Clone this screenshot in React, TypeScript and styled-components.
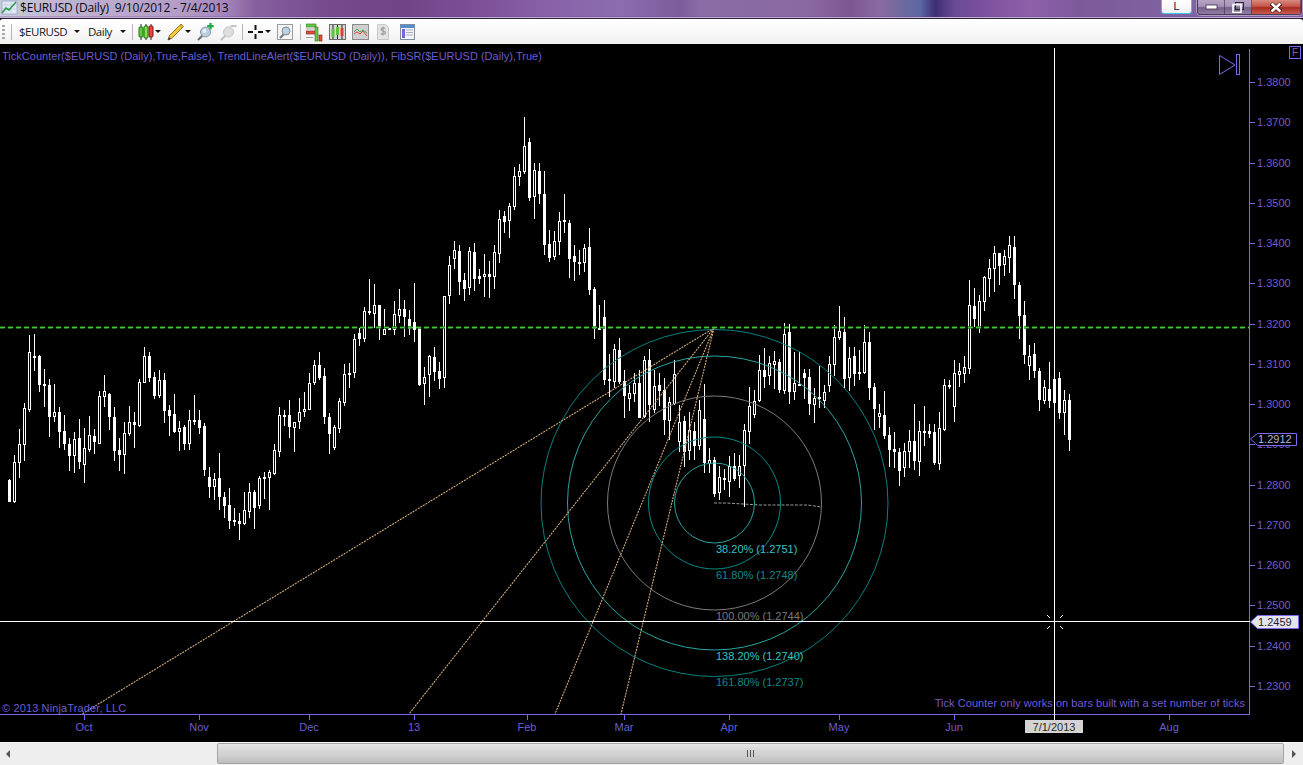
import React from "react";
import styled, { createGlobalStyle } from "styled-components";

const Global = createGlobalStyle`
  html, body { margin: 0; padding: 0; height: 100%; background: #000; overflow: hidden; }
  #root { height: 100%; }
`;

const Window = styled.div`
  width: 1303px;
  height: 765px;
  display: flex;
  flex-direction: column;
  overflow: hidden;
  font-family: "Liberation Sans", Arial, sans-serif;
`;

const TitleBar = styled.header`
  height: 17px;
  display: flex;
  align-items: flex-start;
  padding: 0 1px 0 1px;
  border-bottom: 1px solid #c4aeda;
  box-shadow: inset 0 -1px 0 rgba(90, 60, 120, 0.25);
  background: linear-gradient(90deg, #c9cbdc 0, #c0b4d0 60px, #b49cc6 180px, #a585bb 225px, #87609f 255px, #744a8d 330px, #6f4587 400px, #7b4f96 470px, #8a64aa 560px, #8c6cae 620px, #7e5c9c 680px, #8a6ca6 700px, #8a68a4 810px, #7d5690 850px, #8a6aa2 880px, #686a9e 905px, #5c68a4 920px, #3e2e72 935px, #6a4a94 955px, #8456a2 1000px, #8e60aa 1030px, #7e5a9a 1080px, #8062a0 1170px, #8866aa 1303px);
`;

const TitleText = styled.span`
  margin-left: 2px;
  font: 12px/15px "Open Sans", "Liberation Sans", sans-serif;
  letter-spacing: -0.16px;
  white-space: pre;
  color: #0c0812;
`;

const TitleIcon = styled.svg`
  width: 17px;
  height: 15px;
  flex: none;
`;

const Spacer = styled.div`
  flex: 1;
`;

const LockButton = styled.div`
  width: 29px;
  height: 13px;
  margin-right: 5px;
  border: 1px solid #3fc4e4;
  border-top: none;
  border-radius: 0 0 3px 3px;
  background: linear-gradient(#ffffff, #eef0f2);
  font: 11px/12px "Liberation Sans", sans-serif;
  text-align: center;
  color: #16202c;
`;

const CaptionGroup = styled.div`
  display: flex;
  height: 14px;
  border: 1px solid #4c3a58;
  border-top: none;
  border-radius: 0 0 4px 4px;
  overflow: hidden;
  box-shadow: 0 0 0 1px rgba(255, 255, 255, 0.35);
`;

const CaptionButton = styled.div<{ $w: number; $danger?: boolean }>`
  box-sizing: border-box;
  width: ${(p) => p.$w}px;
  height: 100%;
  display: flex;
  align-items: center;
  justify-content: center;
  border-right: 1px solid rgba(60, 40, 70, 0.55);
  background: ${(p) =>
    p.$danger
      ? "linear-gradient(#d88a80 0, #c4564a 45%, #a82c22 55%, #c85c50 100%)"
      : "linear-gradient(#b6a3c4 0, #a591b6 45%, #75618c 55%, #8f7ca2 100%)"};
`;

const Toolbar = styled.nav`
  display: flex;
  align-items: center;
  border-radius: 3px 3px 0 0;
  background: linear-gradient(#ffffff 0, #fbfbfb 40%, #f0f0f0 100%);
  border-top: 1px solid #2c2034;
  box-sizing: border-box;
  height: 26px;
`;

const Grip = styled.div`
  width: 3px;
  height: 14px;
  margin-left: 2px;
  background: repeating-linear-gradient(#a8a8a8 0 2px, transparent 2px 4px);
`;

const Sep = styled.div<{ $ml: number }>`
  width: 1px;
  height: 16px;
  margin-left: ${(p) => p.$ml}px;
  background: #b4b4b4;
`;

const DropLabel = styled.span<{ $ml: number; $w: number }>`
  flex: none;
  width: ${(p) => p.$w}px;
  margin-left: ${(p) => p.$ml}px;
  font: 11.5px/16px "Open Sans", "Liberation Sans", sans-serif;
  letter-spacing: -0.48px;
  white-space: nowrap;
  color: #101828;
`;

const Caret = styled.i<{ $ml: number }>`
  display: block;
  flex: none;
  margin-left: ${(p) => p.$ml}px;
  width: 0;
  height: 0;
  border-left: 3px solid transparent;
  border-right: 3px solid transparent;
  border-top: 3px solid #111;
`;

const Tool = styled.svg<{ $ml: number; $w: number }>`
  flex: none;
  width: ${(p) => p.$w}px;
  height: 20px;
  margin-left: ${(p) => p.$ml}px;
`;

const ChartPane = styled.main`
  flex: none;
  height: 698px;
  background: #000;
`;

const ChartSvg = styled.svg`
  display: block;
  width: 1303px;
  height: 698px;
  font-family: "Liberation Sans", Arial, sans-serif;
  font-size: 11px;
  text {
    white-space: pre;
  }
`;

const ScrollBar = styled.footer`
  flex: 1;
  display: flex;
  align-items: flex-start;
  background: #eeeeee;
  border-top: 1px solid #f8f8f8;
`;

const ArrowCell = styled.div<{ $w: number }>`
  width: ${(p) => p.$w}px;
  height: 100%;
  display: flex;
  align-items: center;
  justify-content: center;
  flex: none;
`;

const Arrow = styled.i<{ $dir: "left" | "right" }>`
  display: block;
  width: 0;
  height: 0;
  border-top: 4px solid transparent;
  border-bottom: 4px solid transparent;
  ${(p) => (p.$dir === "left" ? "border-right: 4px solid #555;" : "border-left: 4px solid #555;")}
`;

const Track = styled.div`
  width: 201px;
  flex: none;
`;

const Thumb = styled.div`
  width: 1067px;
  height: 21px;
  box-sizing: border-box;
  flex: none;
  display: flex;
  align-items: center;
  justify-content: center;
  border: 1px solid #a4a4a4;
  border-radius: 2px;
  background: linear-gradient(#e6e6e6 0, #d8d8d8 30%, #cfcfcf 60%, #bdbdbd 100%);
`;

const ThumbGrip = styled.div`
  width: 7px;
  height: 7px;
  background: repeating-linear-gradient(90deg, #555 0 1px, transparent 1px 3px);
`;

type C = [number, number, number, number, number, number];

const S1: C[] = [
  [28,0,450,516,447,516],[43,1,397,516,375,518],[58,1,343,398,297,444],[73,1,235,344,220,392],[88,1,67,240,15,245],[103,0,79,84,12,123],[118,0,79,165,75,186],[133,0,162,168,118,231],[148,0,165,261,148,321],[163,1,247,261,163,276],[178,0,246,306,232,354],[193,0,303,342,255,360],[208,0,342,378,324,423],[223,1,327,378,306,429],[238,0,324,396,267,417],[253,1,355,404,294,459],[268,1,316,360,258,366],[283,0,318,336,297,372],[298,1,198,342,183,342],[313,1,184,200,136,231],[328,0,192,261,189,300],[343,0,261,363,232,393],[358,0,360,375,324,423],[373,1,309,375,277,432],[388,1,277,312,228,318],[403,0,277,285,247,354],[418,1,156,288,148,291],[433,1,79,158,52,158],[448,0,78,144,67,156],[463,0,141,198,126,207],[478,1,150,198,121,204],[493,0,150,243,129,279],[508,0,240,258,225,318],[523,0,252,306,192,309],[538,1,295,305,273,363],[553,0,291,342,285,360],[568,1,270,342,240,360],[583,0,270,273,195,285],[598,0,270,294,240,312],[613,0,288,420,280,438],[628,0,441,471,411,504],[643,1,447,471,429,510],[658,0,444,501,369,540],[673,0,501,528,486,564],[688,0,525,573,474,597],[703,0,570,576,534,588],[718,0,573,582,549,630],[733,1,540,582,486,585],[748,1,486,546,459,564],[763,0,486,534,480,597],[778,1,444,528,438,537],[793,0,441,447,426,507],[808,1,426,444,420,540],[823,1,360,432,342,435],[838,1,255,366,232,381],[853,0,255,261,240,288],[868,0,255,291,210,324],[883,1,277,293,277,366],[898,1,247,277,204,297],
];

const S2: C[] = [
  [13,1,897,906,846,921],[28,1,820,900,790,900],[43,1,766,818,750,826],[58,0,766,804,726,810],[73,0,798,921,775,942],[88,0,921,972,909,1032],[103,1,951,1014,945,1020],[118,1,873,957,865,969],[133,1,793,879,762,888],[148,0,790,795,759,834],[163,1,687,789,672,804],[178,0,669,687,654,708],[193,1,603,687,591,696],[208,0,604,608,507,615],[223,1,585,612,522,655],[238,0,585,655,585,690],[253,1,657,675,597,675],[268,0,655,659,655,659],[283,1,612,660,573,675],[298,1,598,618,537,640],[313,0,597,621,570,681],[328,0,627,657,600,675],[343,0,636,660,519,696],[358,0,654,825,654,828],[373,1,801,822,771,885],[388,1,738,795,735,861],[403,0,741,786,711,813],[418,0,783,807,756,837],[433,1,558,804,558,834],[448,1,465,558,438,582],[463,1,420,447,393,477],[478,0,423,516,405,555],[493,0,510,537,489,573],[508,1,423,534,411,555],[523,0,426,507,399,543],[538,0,498,507,477,522],[553,1,492,500,432,561],[568,0,492,501,453,564],[583,1,426,501,405,537],[598,1,327,432,300,459],[613,0,318,336,303,369],[628,1,288,333,279,384],[643,1,198,291,171,300],[658,1,183,200,162,228],[673,1,108,186,21,192],[688,0,96,264,84,273],[703,1,180,261,159,327],[718,0,183,252,159,282],[733,0,252,405,183,435],[748,0,402,444,360,456],[763,1,393,441,363,450],[778,1,333,396,306,435],[793,0,330,336,252,369],[808,0,339,447,330,504],[823,0,438,456,405,513],[838,0,456,460,420,495],[853,1,414,459,402,486],[868,0,411,540,354,555],[883,0,537,657,531,687],[898,0,654,657,585,657],
];

const S3: C[] = [
  [13,0,51,240,0,255],[28,0,237,242,162,291],[43,1,148,246,132,264],[58,0,150,246,114,252],[73,0,243,288,210,354],[88,1,279,296,255,333],[103,1,249,282,219,306],[118,0,249,354,210,354],[133,1,180,351,168,354],[148,0,180,315,147,366],[163,1,258,330,210,339],[178,0,255,273,220,318],[193,0,270,360,234,405],[208,1,306,363,290,420],[223,1,222,312,180,315],[238,1,366,426,315,456],[253,0,363,456,348,501],[268,1,390,453,336,480],[283,0,393,438,366,480],[298,1,330,438,300,450],[313,0,357,489,252,519],[328,1,481,492,444,519],[343,0,480,582,472,590],[358,1,531,579,498,600],[373,0,534,536,507,570],[388,1,498,545,468,591],[403,0,498,537,459,543],[418,1,498,528,465,564],[433,1,390,498,372,622],[448,1,318,396,262,432],[463,1,303,345,270,354],[478,1,210,303,165,306],[493,0,210,231,145,265],[508,1,189,228,168,255],[523,1,183,194,153,267],[538,0,186,270,177,279],[553,1,102,273,70,282],[568,0,96,276,72,312],[583,1,250,276,156,300],[598,0,253,255,156,258],[613,0,219,234,207,297],[628,0,231,312,207,345],[643,1,294,315,264,369],[658,0,291,298,198,324],[673,1,276,303,255,324],[688,1,192,258,168,276],[703,1,111,195,75,228],[718,1,93,114,18,120],[733,0,96,237,50,264],[748,1,174,234,141,273],[763,0,168,222,141,259],[778,0,216,222,150,240],
];

const S4: C[] = [
  [13,1,366,459,315,462],[28,0,366,504,336,540],[43,0,501,567,489,630],[58,1,579,591,552,624],[73,0,585,648,513,657],[88,0,645,690,621,741],[103,0,687,696,636,744],[118,0,696,753,685,798],[133,1,693,744,669,771],[148,1,663,696,630,744],[163,0,663,723,552,750],[178,1,633,726,603,768],[193,0,633,636,558,678],[208,0,633,642,612,654],[223,0,636,729,612,735],[238,1,624,732,576,750],[253,1,495,630,477,633],[268,0,495,500,480,507],[283,1,459,561,420,606],[298,1,454,465,429,501],[313,1,441,462,408,489],[328,1,255,447,180,462],[343,0,258,297,204,321],[358,1,243,324,225,339],[373,1,171,246,168,273],[388,1,144,177,117,231],[403,1,99,147,78,216],[418,0,99,138,99,195],[433,1,108,135,90,168],[448,1,75,114,48,159],[463,0,81,195,48,237],[478,0,195,288,186,357],[493,0,285,405,243,432],[508,1,408,438,375,480],[523,0,402,453,369,474],[538,0,453,540,444,573],[553,1,501,543,480,552],[568,0,507,543,426,564],[583,0,477,549,420,597],[598,0,474,579,456,597],[613,1,540,579,510,645],[628,0,540,660,522,693],
];

const series: { x0: number; y0: number; items: C[] }[] = [
  { x0: 0, y0: 330, items: S1 },
  { x0: 300, y0: 110, items: S2 },
  { x0: 600, y0: 300, items: S3 },
  { x0: 860, y0: 220, items: S4 },
];

function Candles() {
  const rects: React.ReactNode[] = [];
  series.forEach((s, si) =>
    s.items.forEach(([v, hollow, t, b, hi, lo], i) => {
      const x = Math.floor(s.x0 + v / 3);
      const y = (n: number) => Math.round(s.y0 + n / 3);
      const top = y(t);
      const h = Math.max(2, y(b) - top);
      rects.push(
        <g key={`${si}-${i}`}>
          <rect x={x} y={y(hi)} width={1} height={Math.max(1, y(lo) - y(hi))} fill="#fff" />
          <rect x={x - 1} y={top} width={3} height={h} fill="#fff" />
          {hollow === 1 && h > 2 && <rect x={x} y={top + 1} width={1} height={h - 2} fill="#000" />}
        </g>
      );
    })
  );
  return <g shapeRendering="crispEdges">{rects}</g>;
}

const AXIS = "#7b68ee";
const LABEL = "#6d5dd2";

const prices: [string, number][] = [
  ["1.3800", 82], ["1.3700", 122], ["1.3600", 163], ["1.3500", 203], ["1.3400", 243],
  ["1.3300", 283], ["1.3200", 324], ["1.3100", 364], ["1.3000", 404], ["1.2900", 444],
  ["1.2800", 485], ["1.2700", 525], ["1.2600", 565], ["1.2500", 605], ["1.2400", 646], ["1.2300", 686],
];

const months: [string, number][] = [
  ["Oct", 84], ["Nov", 199], ["Dec", 309], ["13", 414], ["Feb", 527], ["Mar", 624],
  ["Apr", 729], ["May", 839], ["Jun", 954], ["Aug", 1169],
];

const rings: [number, string][] = [
  [173.5, "#058080"], [147, "#2aa5a5"], [107, "#7c7c7c"], [66, "#058a8a"], [40, "#2aa5a5"],
];

const fibLabels: [string, number, string][] = [
  ["38.20% (1.2751)", 553, "#36c4c4"],
  ["61.80% (1.2748)", 579, "#0f8a8a"],
  ["100.00% (1.2744)", 620, "#7a7a7a"],
  ["138.20% (1.2740)", 660, "#36c4c4"],
  ["161.80% (1.2737)", 686, "#0f8a8a"],
];

const fanEnds = [82, 409, 555, 621];

function Chart() {
  return (
    <ChartSvg viewBox="0 44 1303 698">
      <Candles />

      {rings.map(([r, c]) => (
        <circle key={r} cx={714.5} cy={503} r={r} fill="none" stroke={c} strokeWidth={1} />
      ))}
      {fanEnds.map((x) => (
        <line key={x} x1={714} y1={328} x2={x} y2={714} stroke="#d0aa78" strokeWidth={1.1} strokeDasharray="2 1" />
      ))}
      <polyline points="714,503 726,503 760,505 808,505 821,507" fill="none" stroke="#9a9a9a" strokeWidth={1} strokeDasharray="3 1.5" />

      <g shapeRendering="crispEdges" strokeDasharray="5 3">
        <line x1={0} y1={327.5} x2={1249} y2={327.5} stroke="#177a17" strokeWidth={3} opacity={0.75} />
        <line x1={0} y1={327.5} x2={1249} y2={327.5} stroke="#3ccc3c" strokeWidth={1} />
      </g>

      {fibLabels.map(([t, y, c]) => (
        <text key={t} x={716} y={y} fill={c}>{t}</text>
      ))}

      <g shapeRendering="crispEdges">
        <line x1={1249.5} y1={49} x2={1249.5} y2={714} stroke={AXIS} />
        <line x1={0} y1={714.5} x2={1250} y2={714.5} stroke={AXIS} />
        {prices.map(([, y]) => (
          <line key={y} x1={1250} y1={y + 0.5} x2={1255} y2={y + 0.5} stroke={AXIS} />
        ))}
        {months.map(([, x]) => (
          <line key={x} x1={x + 0.5} y1={714} x2={x + 0.5} y2={720} stroke={AXIS} />
        ))}
        <line x1={1054.5} y1={48} x2={1054.5} y2={720} stroke="#fff" />
        <line x1={0} y1={621.5} x2={1250} y2={621.5} stroke="#fff" />
      </g>
      <path d="M1047 615l3 3M1063 615l-3 3M1047 629l3-3M1063 629l-3-3" stroke="#fff" strokeWidth={1} />

      {prices.map(([t, y]) => (
        <text key={t} x={1257} y={y + 4} fill={LABEL}>{t}</text>
      ))}
      {months.map(([t, x]) => (
        <text key={t} x={x} y={731} fill={LABEL} textAnchor="middle">{t}</text>
      ))}

      <text x={2} y={60} fill={LABEL} letterSpacing={0.02}>TickCounter($EURUSD (Daily),True,False), TrendLineAlert($EURUSD (Daily)), FibSR($EURUSD (Daily),True)</text>
      <text x={2} y={712} fill={LABEL} letterSpacing={0.13}>© 2013 NinjaTrader, LLC</text>
      <text x={1245} y={707} fill={LABEL} textAnchor="end" letterSpacing={0.05}>Tick Counter only works on bars built with a set number of ticks</text>

      <polygon points="1250.5,439 1257.5,433.5 1296.5,433.5 1296.5,445.5 1257.5,445.5" fill="#000" stroke={AXIS} />
      <text x={1258} y={443} fill="#b4b4d8">1.2912</text>
      <polygon points="1250.5,622 1257.5,615.5 1298.5,615.5 1298.5,628.5 1257.5,628.5" fill="#e4e4ec" stroke={AXIS} />
      <text x={1258} y={626} fill="#1c2230">1.2459</text>

      <rect x={1025} y={720} width={58} height={13} fill="#d4d4d4" />
      <text x={1054} y={731} fill="#2a2a2a" textAnchor="middle">7/1/2013</text>

      <path d="M1219.5 55.5L1235 65L1219.5 74.5Z" fill="none" stroke={AXIS} />
      <rect x={1236.5} y={54.5} width={3} height={20} fill="none" stroke={AXIS} />
      <rect x={1289.5} y={46.5} width={11} height={12} fill="none" stroke={AXIS} />
      <text x={1292} y={56} fill="#8a5aa8" fontSize={10}>F</text>
    </ChartSvg>
  );
}

export default function App() {
  return (
    <Window>
      <Global />
      <TitleBar>
        <TitleIcon viewBox="0 0 17 15">
          <rect x="1" y="1" width="15" height="13" fill="#dfe8f4" stroke="#8aa0bc" strokeWidth="0.7" />
          <path d="M1 5h15M1 9h15M5 1v13M10 1v13" stroke="#b4c4d8" strokeWidth="0.5" />
          <path d="M1 13L5 8l3 2 7-8" fill="none" stroke="#2c9a4a" strokeWidth="1.6" />
        </TitleIcon>
        <TitleText>$EURUSD (Daily)  9/10/2012 - 7/4/2013</TitleText>
        <Spacer />
        <LockButton>L</LockButton>
        <CaptionGroup>
          <CaptionButton $w={27}>
            <svg width="13" height="6" viewBox="0 0 13 6"><rect x="1" y="1" width="11" height="4" fill="#fff" stroke="#3c3048" strokeWidth="0.8" /></svg>
          </CaptionButton>
          <CaptionButton $w={27}>
            <svg width="12" height="11" viewBox="0 0 12 11"><rect x="3.5" y="0.5" width="8" height="7" fill="none" stroke="#2c2434" /><rect x="1" y="2.5" width="8" height="8" fill="none" stroke="#fff" strokeWidth="1.6" /></svg>
          </CaptionButton>
          <CaptionButton $w={49} $danger>
            <svg width="14" height="11" viewBox="0 0 14 11"><path d="M2 1.5L12 9.5M12 1.5L2 9.5" stroke="#3e1a1a" strokeWidth="4" /><path d="M2.5 1.5L11.5 9.5M11.5 1.5L2.5 9.5" stroke="#fff" strokeWidth="2.4" /></svg>
          </CaptionButton>
        </CaptionGroup>
      </TitleBar>

      <Toolbar>
        <Grip />
        <Sep $ml={6} />
        <DropLabel $ml={7} $w={48}>$EURUSD</DropLabel>
        <Caret $ml={7} />
        <DropLabel $ml={8} $w={27}>Daily</DropLabel>
        <Caret $ml={5} />
        <Sep $ml={6} />

        <Tool $ml={5} $w={16} viewBox="0 0 16 20">
          <path d="M3 2v16M8 2v16M13 2v16" stroke="#222" strokeWidth="1" />
          <rect x="1" y="5" width="4" height="10" rx="1" fill="#5fd038" stroke="#246a1c" />
          <rect x="6" y="4" width="4" height="12" rx="1" fill="#7ee04a" stroke="#246a1c" />
          <rect x="11" y="4" width="4" height="11" rx="1" fill="#e8493a" stroke="#7c1c14" />
        </Tool>
        <Caret $ml={1} />
        <Tool $ml={6} $w={17} viewBox="0 0 17 20">
          <path d="M14 2l2.5 2.5L5 16 1 18l1.5-4.5z" fill="#f4c93a" stroke="#8a6a18" strokeWidth="0.9" />
          <path d="M13 3.5l2.5 2.5" stroke="#b8892a" strokeWidth="1" />
          <path d="M1 18l1-3 2 2z" fill="#333" />
        </Tool>
        <Caret $ml={1} />
        <Tool $ml={5} $w={18} viewBox="0 0 18 20">
          <path d="M8 12L2 18" stroke="#6a7078" strokeWidth="2.2" />
          <circle cx="9.5" cy="10" r="5" fill="#b8cfe0" stroke="#8c98a4" />
          <circle cx="8.5" cy="9" r="2" fill="#e8f2f8" />
          <path d="M14.5 1v6.5M11.2 4.2h6.5" stroke="#1caa44" strokeWidth="2.2" />
        </Tool>
        <Tool $ml={5} $w={18} viewBox="0 0 18 20">
          <path d="M8 12L2 18" stroke="#c0c0c0" strokeWidth="2.2" />
          <circle cx="9.5" cy="10" r="5" fill="#dedede" stroke="#c6c6c6" />
          <path d="M11.5 4h6" stroke="#b4b4b4" strokeWidth="1.6" />
        </Tool>
        <Sep $ml={5} />

        <Tool $ml={5} $w={16} viewBox="0 0 16 20">
          <path d="M7.5 3v5M7.5 12v5M0 10h5M10 10h5" stroke="#111" strokeWidth="2" />
        </Tool>
        <Caret $ml={1} />
        <Tool $ml={6} $w={17} viewBox="0 0 17 20">
          <rect x="0.5" y="2.5" width="15" height="15" fill="#f4f4f4" stroke="#9c9c9c" />
          <path d="M7 12l-4 4" stroke="#6e747c" strokeWidth="2" />
          <circle cx="9" cy="9" r="4" fill="#bcd2e2" stroke="#7e8c9a" />
        </Tool>
        <Sep $ml={6} />

        <Tool $ml={5} $w={17} viewBox="0 0 17 20">
          <rect x="0" y="2" width="10" height="3" fill="#5fce3c" stroke="#2e6e1e" strokeWidth="0.6" />
          <rect x="0" y="9" width="10" height="3" fill="#e84a3a" stroke="#7a1c14" strokeWidth="0.6" />
          <rect x="0" y="15" width="7" height="1" fill="#a0a0a0" />
          <rect x="0" y="6.5" width="8" height="1" fill="#a0a0a0" />
          <rect x="9" y="5" width="3" height="14" fill="#5fce3c" stroke="#2e6e1e" strokeWidth="0.6" />
          <rect x="13" y="13" width="3" height="6" fill="#e84a3a" stroke="#7a1c14" strokeWidth="0.6" />
        </Tool>
        <Tool $ml={6} $w={17} viewBox="0 0 17 20">
          <rect x="0.5" y="2.5" width="16" height="15" fill="#d8d8d8" stroke="#6c6c6c" />
          <path d="M4 3v14M8.5 3v14M13 3v14" stroke="#222" />
          <rect x="2.5" y="7" width="3" height="8" fill="#59c636" />
          <rect x="7" y="5" width="3" height="8" fill="#59c636" />
          <rect x="11.5" y="6" width="3" height="8" fill="#e04434" />
        </Tool>
        <Tool $ml={6} $w={17} viewBox="0 0 17 20">
          <rect x="0.5" y="2.5" width="16" height="15" fill="#cfcfcf" stroke="#8c8c8c" />
          <path d="M2 10l3-3 3 3 3-2 4 3" fill="none" stroke="#3cb05a" strokeWidth="1" />
          <path d="M2 12l3-2 3 2 3-3 4 5" fill="none" stroke="#e0483a" strokeWidth="1" />
        </Tool>
        <Tool $ml={7} $w={14} viewBox="0 0 14 20">
          <path d="M1.5 2.5h8l3 3v12h-11z" fill="#e4e4e4" stroke="#c8c8c8" />
          <path d="M9 6.5c-1-1.2-4-1-4 .8 0 2.2 4.4 1.2 4.4 3.4 0 1.8-3.2 2-4.6.8M7 4.5v9" fill="none" stroke="#a0a0a0" strokeWidth="1.3" />
        </Tool>
        <Tool $ml={10} $w={15} viewBox="0 0 15 20">
          <rect x="0.5" y="2.5" width="14" height="15" fill="#f4f4f8" stroke="#7e8ca4" />
          <rect x="1" y="3" width="13" height="3" fill="#5a8cc8" />
          <rect x="2" y="7" width="3" height="9" fill="#7c62d8" />
          <path d="M6 8h7M6 10.5h7M6 13h7" stroke="#a4b0c4" />
        </Tool>
      </Toolbar>

      <ChartPane>
        <Chart />
      </ChartPane>

      <ScrollBar>
        <ArrowCell $w={16}><Arrow $dir="left" /></ArrowCell>
        <Track />
        <Thumb><ThumbGrip /></Thumb>
        <ArrowCell $w={19}><Arrow $dir="right" /></ArrowCell>
      </ScrollBar>
    </Window>
  );
}
